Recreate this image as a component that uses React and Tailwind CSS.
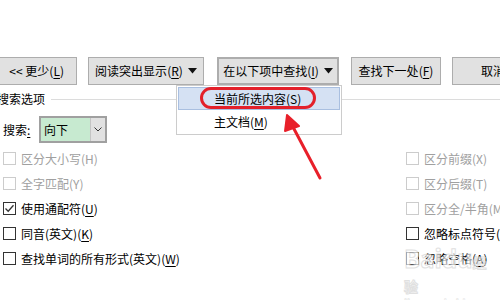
import React from 'react'

const Btn = ({ children, className = '' }) => (
  <div
    className={`h-[28px] shrink-0 flex items-center justify-center bg-[#e1e1e1] border border-[#adadad] text-[12px] text-black whitespace-nowrap ${className}`}
  >
    {children}
  </div>
)

const Key = ({ k }) => (
  <span>(<span className="underline underline-offset-2">{k}</span>)</span>
)

const Tri = () => (
  <svg width="9" height="6" viewBox="0 0 9 6" className="ml-[5px]">
    <path d="M0 0 L9 0 L4.5 5.5 Z" fill="#111" />
  </svg>
)

const Check = ({ label, k, checked, disabled }) => (
  <div className="h-[25px] flex items-center whitespace-nowrap">
    <div
      className={`w-[13px] h-[13px] shrink-0 border flex items-center justify-center bg-white ${
        disabled ? 'border-[#cccccc]' : 'border-[#333333]'
      }`}
    >
      {checked && (
        <svg width="11" height="11" viewBox="0 0 11 11">
          <path d="M1.5 5.5 L4.2 8.3 L9.5 2.2" stroke="#333" strokeWidth="1.3" fill="none" />
        </svg>
      )}
    </div>
    <span className={`ml-[5px] text-[12px] ${disabled ? 'text-[#a0a0a0]' : 'text-black'}`}>
      {label}
      {disabled ? `(${k})` : <Key k={k} />}
    </span>
  </div>
)

export default function App() {
  return (
    <div
      className="relative w-[500px] h-[300px] overflow-hidden bg-white pt-[57px]"
      style={{ fontFamily: '"Noto Sans CJK SC", "Noto Sans", sans-serif' }}
    >
      {/* BUTTONS */}
      <div className="flex items-start">
        <Btn className="w-[91px] ml-[-14px] justify-end pr-[12px]">
          {'<< 更少'}<Key k="L" />
        </Btn>
        <Btn className="w-[116px] ml-[11px]">
          阅读突出显示<Key k="R" /><Tri />
        </Btn>
        <Btn className="w-[122px] ml-[13px] border-2 border-[#0078d7]">
          在以下项中查找<Key k="I" /><Tri />
        </Btn>
        <Btn className="w-[90px] ml-[12px]">
          查找下一处<Key k="F" />
        </Btn>
        <Btn className="w-[70px] ml-[11px] justify-start pl-[28px]">
          取消
        </Btn>
      </div>

      {/* SECTION HEADER */}
      <div className="mt-[4px] h-[20px] flex items-center ml-[-3px]">
        <span className="text-[12px] text-black whitespace-nowrap">搜索选项</span>
        <div className="flex-1 ml-[6px] h-px bg-[#dcdcdc]" />
      </div>

      {/* SELECT */}
      <div className="mt-[7px] flex items-center pl-[3px] h-[27px]">
        <span className="text-[12px] text-black w-[36px]">
          搜索<span className="underline underline-offset-2">:</span>
        </span>
        <div className="flex h-[27px] w-[68px] border-2 border-[#a0a0a0]">
          <div className="flex-1 bg-[#c7ead0] flex items-center pl-[3px] text-[12px] text-black">
            向下
          </div>
          <div className="w-[15px] bg-[#e1e1e1] flex items-center justify-center border-l border-[#c4c4c4]">
            <svg width="8" height="5" viewBox="0 0 8 5">
              <path d="M0.5 0.5 L4 4 L7.5 0.5" stroke="#333" strokeWidth="1" fill="none" />
            </svg>
          </div>
        </div>
      </div>

      {/* OPTIONS */}
      <div className="mt-[3px] grid grid-cols-[403px_1fr] pl-[3px]">
        <div className="flex flex-col">
          <Check label="区分大小写" k="H" disabled />
          <Check label="全字匹配" k="Y" disabled />
          <Check label="使用通配符" k="U" checked />
          <Check label="同音(英文)" k="K" />
          <Check label="查找单词的所有形式(英文)" k="W" />
        </div>
        <div className="flex flex-col">
          <Check label="区分前缀" k="X" disabled />
          <Check label="区分后缀" k="T" disabled />
          <Check label="区分全/半角" k="M" disabled />
          <Check label="忽略标点符号" k="S" />
          <Check label="忽略空格" k="A" />
        </div>
      </div>

      {/* DROPDOWN MENU */}
      <div className="absolute left-[176px] top-[85px] w-[166px] h-[50px] bg-white border border-[#cccccc] p-px">
        <div className="h-[23px] bg-[#d5e1f3] border border-[#a9bfe0] flex items-center pl-[35px] text-[12px] text-black whitespace-nowrap">
          当前所选内容<Key k="S" />
        </div>
        <div className="h-[24px] flex items-center pl-[36px] text-[12px] text-black whitespace-nowrap">
          主文档<Key k="M" />
        </div>
      </div>

      {/* RED MARK */}
      <div className="absolute left-[200px] top-[87px] w-[116px] h-[22px] rounded-full border-[3px] border-[#e3202a]" />
      <svg className="absolute left-0 top-0" width="500" height="300">
        <line x1="320" y1="178" x2="293" y2="127" stroke="#e8202a" strokeWidth="3" strokeLinecap="round" />
        <path d="M287 115 L299 126 L285 131 Z" fill="#e8202a" stroke="#e8202a" strokeWidth="2" strokeLinejoin="round" />
      </svg>

      {/* WATERMARK */}
      <div className="absolute left-[404px] top-[246px] flex flex-col leading-none pointer-events-none opacity-70">
        <span className="text-[24px] font-bold text-white" style={{ WebkitTextStroke: '1px #d4d4d4' }}>
          Baidu<span className="text-[14px]">经验</span>
        </span>
        <span className="text-[10px] font-bold text-white mt-[4px]" style={{ WebkitTextStroke: '0.5px #d4d4d4' }}>
          jingyan.baidu.com
        </span>
      </div>
    </div>
  )
}
